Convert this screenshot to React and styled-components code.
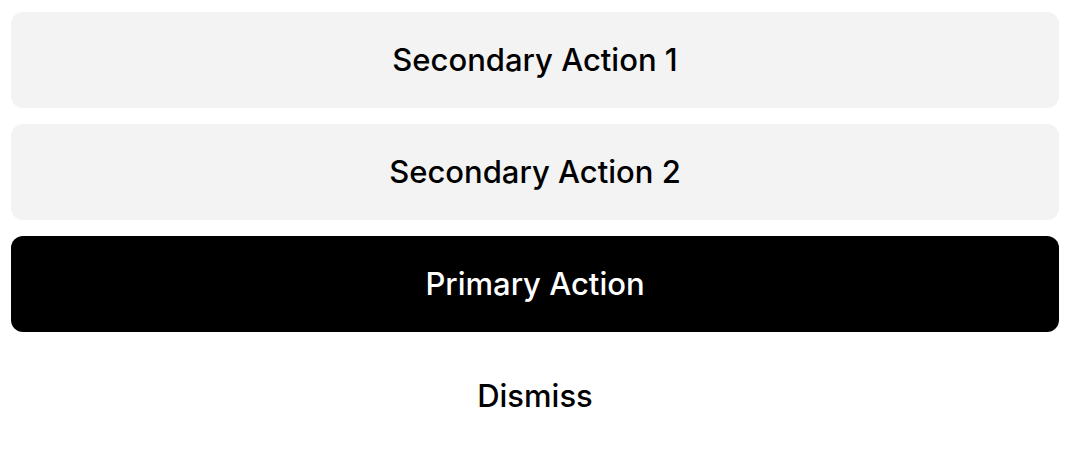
import React from "react";
import styled, { createGlobalStyle } from "styled-components";

const Global = createGlobalStyle`
  html, body { margin: 0; padding: 0; background: #ffffff; }
  body { font-family: Inter, "Noto Sans", sans-serif; }
`;

const Stack = styled.div`
  display: flex;
  flex-direction: column;
  gap: 16px;
  padding: 12px 17px 10px 11px;
`;

const Button = styled.button`
  height: 96px;
  width: 100%;
  border: none;
  border-radius: 12px;
  display: flex;
  align-items: center;
  justify-content: center;
  padding: 0 0 2px;
  font-family: Inter, "Noto Sans", sans-serif;
  font-size: 31px;
  font-weight: 550;
  letter-spacing: 0;
  cursor: pointer;
  background: ${(p) =>
    p.$variant === "primary" ? "#000000" : p.$variant === "tertiary" ? "transparent" : "#f3f3f3"};
  color: ${(p) => (p.$variant === "primary" ? "#ffffff" : "#000000")};
`;

export default function App() {
  return (
    <>
      <Global />
      <Stack>
        <Button $variant="secondary">Secondary Action 1</Button>
        <Button $variant="secondary">Secondary Action 2</Button>
        <Button $variant="primary">Primary Action</Button>
        <Button $variant="tertiary">Dismiss</Button>
      </Stack>
    </>
  );
}
